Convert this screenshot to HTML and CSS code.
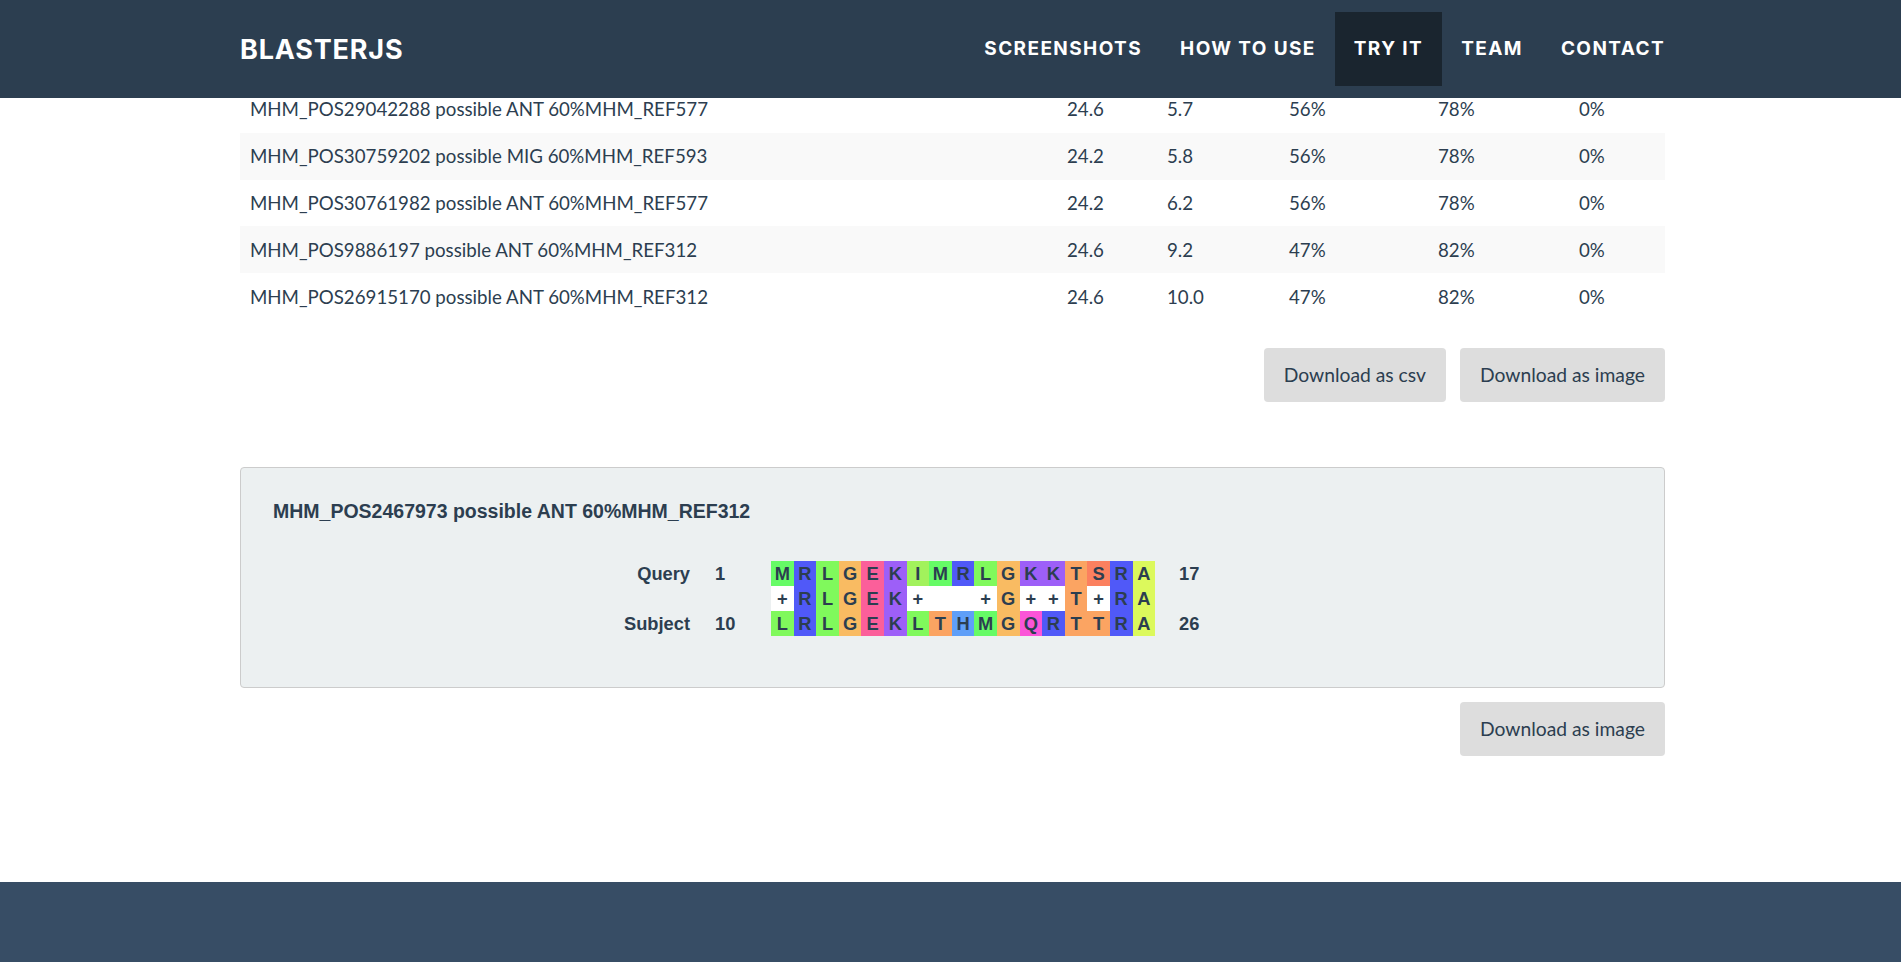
FILE: index.html
```html
<!DOCTYPE html>
<html lang="en">
<head>
<meta charset="utf-8">
<title>BlasterJS</title>
<link rel="stylesheet" href="styles.css">
</head>
<body>
<header class="navbar">
  <div class="nav-inner">
    <a class="brand" href="#">BlasterJS</a>
    <ul class="nav">
      <li><a href="#">Screenshots</a></li>
      <li><a href="#">How to use</a></li>
      <li class="active"><a href="#">Try it</a></li>
      <li><a href="#">Team</a></li>
      <li><a href="#">Contact</a></li>
    </ul>
  </div>
</header>

<main class="container">
  <table class="results">
    <colgroup>
      <col class="w-name"><col class="w-score"><col class="w-eval"><col class="w-ident"><col class="w-pos"><col class="w-gaps">
    </colgroup>
    <tbody>
      <tr><td>MHM_POS29042288 possible ANT 60%MHM_REF577</td><td>24.6</td><td>5.7</td><td>56%</td><td>78%</td><td>0%</td></tr>
      <tr><td>MHM_POS30759202 possible MIG 60%MHM_REF593</td><td>24.2</td><td>5.8</td><td>56%</td><td>78%</td><td>0%</td></tr>
      <tr><td>MHM_POS30761982 possible ANT 60%MHM_REF577</td><td>24.2</td><td>6.2</td><td>56%</td><td>78%</td><td>0%</td></tr>
      <tr><td>MHM_POS9886197 possible ANT 60%MHM_REF312</td><td>24.6</td><td>9.2</td><td>47%</td><td>82%</td><td>0%</td></tr>
      <tr><td>MHM_POS26915170 possible ANT 60%MHM_REF312</td><td>24.6</td><td>10.0</td><td>47%</td><td>82%</td><td>0%</td></tr>
    </tbody>
  </table>

  <div class="btn-row first">
    <button class="btn">Download as csv</button>
    <button class="btn">Download as image</button>
  </div>

  <section class="aln-box">
    <h4 class="aln-title">MHM_POS2467973 possible ANT 60%MHM_REF312</h4>
    <div class="aln">
      <div class="lbl">Query</div>
      <div class="num">1</div>
      <div class="seq">
        <span class="aa m">M</span><span class="aa r">R</span><span class="aa l">L</span><span class="aa g">G</span><span class="aa e">E</span><span class="aa k">K</span><span class="aa i">I</span><span class="aa m">M</span><span class="aa r">R</span><span class="aa l">L</span><span class="aa g">G</span><span class="aa k">K</span><span class="aa k">K</span><span class="aa t">T</span><span class="aa s">S</span><span class="aa r">R</span><span class="aa a">A</span>
      </div>
      <div class="end">17</div>

      <div class="lbl"></div>
      <div class="num"></div>
      <div class="seq">
        <span class="aa w">+</span><span class="aa r">R</span><span class="aa l">L</span><span class="aa g">G</span><span class="aa e">E</span><span class="aa k">K</span><span class="aa w">+</span><span class="aa w"></span><span class="aa w"></span><span class="aa w">+</span><span class="aa g">G</span><span class="aa w">+</span><span class="aa w">+</span><span class="aa t">T</span><span class="aa w">+</span><span class="aa r">R</span><span class="aa a">A</span>
      </div>
      <div class="end"></div>

      <div class="lbl">Subject</div>
      <div class="num">10</div>
      <div class="seq">
        <span class="aa l">L</span><span class="aa r">R</span><span class="aa l">L</span><span class="aa g">G</span><span class="aa e">E</span><span class="aa k">K</span><span class="aa l">L</span><span class="aa t">T</span><span class="aa h">H</span><span class="aa m">M</span><span class="aa g">G</span><span class="aa q">Q</span><span class="aa r">R</span><span class="aa t">T</span><span class="aa t">T</span><span class="aa r">R</span><span class="aa a">A</span>
      </div>
      <div class="end">26</div>
    </div>
  </section>

  <div class="btn-row second">
    <button class="btn">Download as image</button>
  </div>
</main>

<footer class="footer"></footer>
</body>
</html>
```

FILE: styles.css
```css
* { box-sizing: border-box; }

html, body {
  margin: 0;
  padding: 0;
  background: #ffffff;
  color: #2c3e50;
  font-family: "Lato", "Liberation Sans", sans-serif;
}

/* ---------- navbar ---------- */
.navbar {
  position: fixed;
  top: 0;
  left: 0;
  right: 0;
  height: 98px;
  background: #2c3e50;
  z-index: 10;
}

.nav-inner {
  width: 1425px;
  margin-left: calc(50% - 710.5px);
  height: 100%;
  display: flex;
  align-items: center;
  justify-content: space-between;
}

.brand {
  color: #ffffff;
  text-decoration: none;
  font-family: "Inter", "Liberation Sans", sans-serif;
  font-weight: 700;
  font-size: 27px;
  letter-spacing: 0.8px;
  text-transform: uppercase;
}

.nav {
  list-style: none;
  margin: 0 -19px 0 0;
  padding: 0;
  display: flex;
  align-items: center;
  height: 74px;
}

.nav li {
  height: 100%;
}

.nav a {
  display: flex;
  align-items: center;
  height: 100%;
  padding: 0 19px 2px 19px;
  color: #ffffff;
  text-decoration: none;
  font-family: "Inter", "Liberation Sans", sans-serif;
  font-weight: 700;
  font-size: 19px;
  letter-spacing: 1.4px;
  text-transform: uppercase;
}

.nav li.active a {
  background: #1a252f;
}

/* ---------- main ---------- */
.container {
  width: 1425px;
  margin-left: calc(50% - 710.5px);
  padding-top: 86px;
  padding-bottom: 126px;
}

.results {
  width: 100%;
  border-collapse: collapse;
  table-layout: fixed;
  font-size: 18.7px;
}

.w-name { width: 817px; }
.w-score { width: 100px; }
.w-eval { width: 122px; }
.w-ident { width: 149px; }
.w-pos { width: 141px; }
.w-gaps { width: auto; }

.results td {
  height: 46.8px;
  padding: 0 10px;
  vertical-align: middle;
  white-space: nowrap;
}

.results tr:nth-child(even) td {
  background: #f9f9f9;
}

.btn-row {
  display: flex;
  justify-content: flex-end;
  gap: 14px;
}

.btn-row.first { margin-top: 28px; }
.btn-row.second { margin-top: 14px; }

.btn {
  height: 54px;
  padding: 0 20px;
  border: none;
  border-radius: 4px;
  background: #dddddd;
  color: #2c3e50;
  font-family: "Lato", "Liberation Sans", sans-serif;
  font-size: 19.3px;
  cursor: pointer;
}

/* ---------- alignment box ---------- */
.aln-box {
  margin-top: 65px;
  height: 221px;
  background: #ecf0f1;
  border: 1px solid #cccccc;
  border-radius: 4px;
  padding: 32px 32px 0 32px;
  font-family: "Liberation Sans", Arial, sans-serif;
  font-weight: 700;
  color: #2c3e50;
}

.aln-title {
  margin: 0;
  font-size: 19.5px;
  line-height: 22px;
  font-weight: 700;
}

.aln {
  margin-top: 39px;
  display: grid;
  grid-template-columns: 417px 81px auto auto;
  justify-content: start;
  font-size: 18.3px;
}

.aln > div {
  height: 25px;
  line-height: 25px;
}

.lbl { text-align: right; }
.num { padding-left: 25px; }
.end { padding-left: 24px; }

.seq {
  display: flex;
}

.aa {
  width: 22.6px;
  height: 25px;
  text-align: center;
  background: #ffffff;
}

.aa.m { background: #66fb66; }
.aa.r { background: #5059f8; }
.aa.l { background: #80f95c; }
.aa.g { background: #f9bb62; }
.aa.e { background: #fb5f9a; }
.aa.k { background: #9d5ff8; }
.aa.i { background: #a2f25c; }
.aa.t { background: #fba462; }
.aa.s { background: #fb805f; }
.aa.a { background: #dcf95c; }
.aa.h { background: #5f9ff8; }
.aa.q { background: #fb55d8; }
.aa.w { background: #ffffff; }

/* ---------- footer ---------- */
.footer {
  height: 81px;
  background: #374d65;
}
```
